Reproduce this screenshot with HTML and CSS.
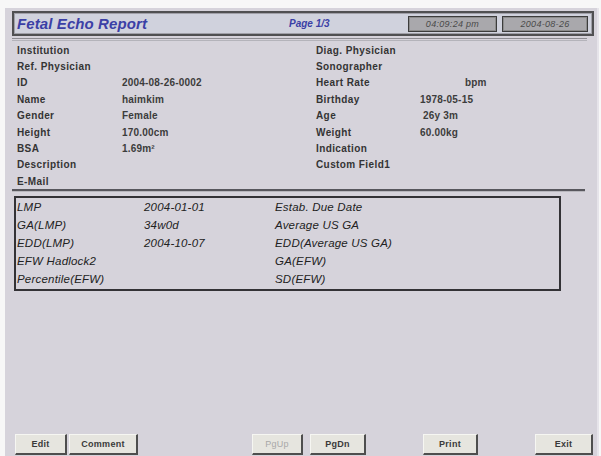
FILE: index.html
```html
<!DOCTYPE html>
<html>
<head>
<meta charset="utf-8">
<link rel="stylesheet" href="styles.css">
</head>
<body>
<div class="screen">
  <div class="titlebar">
    <div class="title">Fetal Echo Report</div>
    <div class="page">Page 1/3</div>
    <div class="stamp">04:09:24 pm</div>
    <div class="stamp date">2004-08-26</div>
  </div>
  <div class="rule-top"></div>
  <div class="info">
    <div class="lbl">Institution</div><div class="val"></div><div class="lbl">Diag. Physician</div><div class="val"></div>
    <div class="lbl">Ref. Physician</div><div class="val"></div><div class="lbl">Sonographer</div><div class="val"></div>
    <div class="lbl">ID</div><div class="val">2004-08-26-0002</div><div class="lbl">Heart Rate</div><div class="val"><span class="bpm">bpm</span></div>
    <div class="lbl">Name</div><div class="val">haimkim</div><div class="lbl">Birthday</div><div class="val">1978-05-15</div>
    <div class="lbl">Gender</div><div class="val">Female</div><div class="lbl">Age</div><div class="val">&nbsp;26y 3m</div>
    <div class="lbl">Height</div><div class="val">170.00cm</div><div class="lbl">Weight</div><div class="val">60.00kg</div>
    <div class="lbl">BSA</div><div class="val">1.69m²</div><div class="lbl">Indication</div><div class="val"></div>
    <div class="lbl">Description</div><div class="val"></div><div class="lbl">Custom Field1</div><div class="val"></div>
    <div class="lbl">E-Mail</div><div class="val"></div><div class="lbl"></div><div class="val"></div>
  </div>
  <div class="rule-mid"></div>
  <div class="obs">
    <div class="olbl">LMP</div><div class="oval">2004-01-01</div><div class="olbl">Estab. Due Date</div>
    <div class="olbl">GA(LMP)</div><div class="oval">34w0d</div><div class="olbl">Average US GA</div>
    <div class="olbl">EDD(LMP)</div><div class="oval">2004-10-07</div><div class="olbl">EDD(Average US GA)</div>
    <div class="olbl">EFW Hadlock2</div><div class="oval"></div><div class="olbl">GA(EFW)</div>
    <div class="olbl">Percentile(EFW)</div><div class="oval"></div><div class="olbl">SD(EFW)</div>
  </div>
  <div class="spacer"></div>
  <div class="buttons">
    <button class="btn b-edit">Edit</button>
    <button class="btn b-comment">Comment</button>
    <button class="btn b-pgup" disabled>PgUp</button>
    <button class="btn b-pgdn">PgDn</button>
    <button class="btn b-print">Print</button>
    <button class="btn b-exit">Exit</button>
  </div>
</div>
</body>
</html>
```
FILE: styles.css
```css
html, body {
  margin: 0;
  padding: 0;
  background: #f7f7f7;
}
body {
  width: 601px;
  height: 456px;
  overflow: hidden;
  font-family: "Liberation Sans", Arial, sans-serif;
}
.screen {
  margin: 8px 0 0 5px;
  width: 585px;
  height: 448px;
  padding: 3px 0 0 7px;
  background: #d6d3db;
  display: flex;
  flex-direction: column;
  border-right: 2px solid #e6e4ea;
}
.titlebar {
  width: 575px;
  height: 21px;
  border: 2px solid #505052;
  box-shadow: inset 0 0 0 1px #a0a0a8;
  background: #d0d2dd;
  display: flex;
  align-items: center;
  padding-left: 3px;
}
.title {
  width: 272px;
  font-size: 15px;
  font-weight: bold;
  font-style: italic;
  color: #3b40a6;
  letter-spacing: 0.1px;
}
.page {
  width: 119px;
  font-size: 10px;
  font-weight: bold;
  font-style: italic;
  color: #3b40a6;
}
.stamp {
  width: 87px;
  height: 14px;
  border: 1px solid #3c3c3c;
  box-shadow: inset 0 0 0 1px #8c8c8c;
  background: #a9a8ac;
  color: #4a4a4a;
  font-size: 9px;
  font-style: italic;
  display: flex;
  align-items: center;
  justify-content: center;
  letter-spacing: 0.3px;
}
.stamp.date {
  margin-left: 5px;
  width: 84px;
}
.rule-top {
  width: 575px;
  height: 1px;
  margin-top: 2px;
  border-top: 1px solid #8d8c92;
  border-bottom: 1px solid #b4b3ba;
}
.info {
  display: grid;
  grid-template-columns: 105px 194px 104px 150px;
  grid-auto-rows: 16.4px;
  padding-left: 5px;
  margin-top: 1px;
  align-items: center;
  font-size: 10px;
  font-weight: bold;
  color: #343434;
  letter-spacing: 0.4px;
}
.val {
  color: #3c3c3c;
  letter-spacing: 0.2px;
}
.bpm {
  margin-left: 45px;
}
.rule-mid {
  width: 573px;
  height: 2px;
  margin-top: -1px;
  background: #58575d;
  border-bottom: 1px solid #b8b7bd;
}
.obs {
  margin: 4px 0 0 2px;
  width: 542px;
  height: 91px;
  border: 2px solid #333236;
  display: grid;
  grid-template-columns: 127px 131px 1fr;
  grid-auto-rows: 18.2px;
  align-items: center;
  padding-left: 1px;
  font-size: 11.5px;
  font-style: italic;
  color: #222222;
  letter-spacing: 0.2px;
}
.spacer {
  flex: 1;
}
.buttons {
  display: flex;
  align-items: stretch;
  height: 21px;
  margin-bottom: 4px;
}
.btn {
  margin: 0;
  padding: 0;
  height: 21px;
  background: #e6e5df;
  border-style: solid;
  border-width: 1px 2px 2px 1px;
  border-color: #f6f6f2 #4e4e4e #4e4e4e #f6f6f2;
  font-family: "Liberation Sans", Arial, sans-serif;
  font-size: 9px;
  font-weight: bold;
  color: #3a3a3a;
  letter-spacing: 0.3px;
}
.btn:disabled {
  color: #a8a8a8;
  font-weight: normal;
}
.b-edit { margin-left: 3px; width: 52px; }
.b-comment { margin-left: 2px; width: 69px; }
.b-pgup { margin-left: 114px; width: 51px; }
.b-pgdn { margin-left: 7px; width: 56px; }
.b-print { margin-left: 57px; width: 55px; }
.b-exit { margin-left: 57px; width: 58px; }
```
